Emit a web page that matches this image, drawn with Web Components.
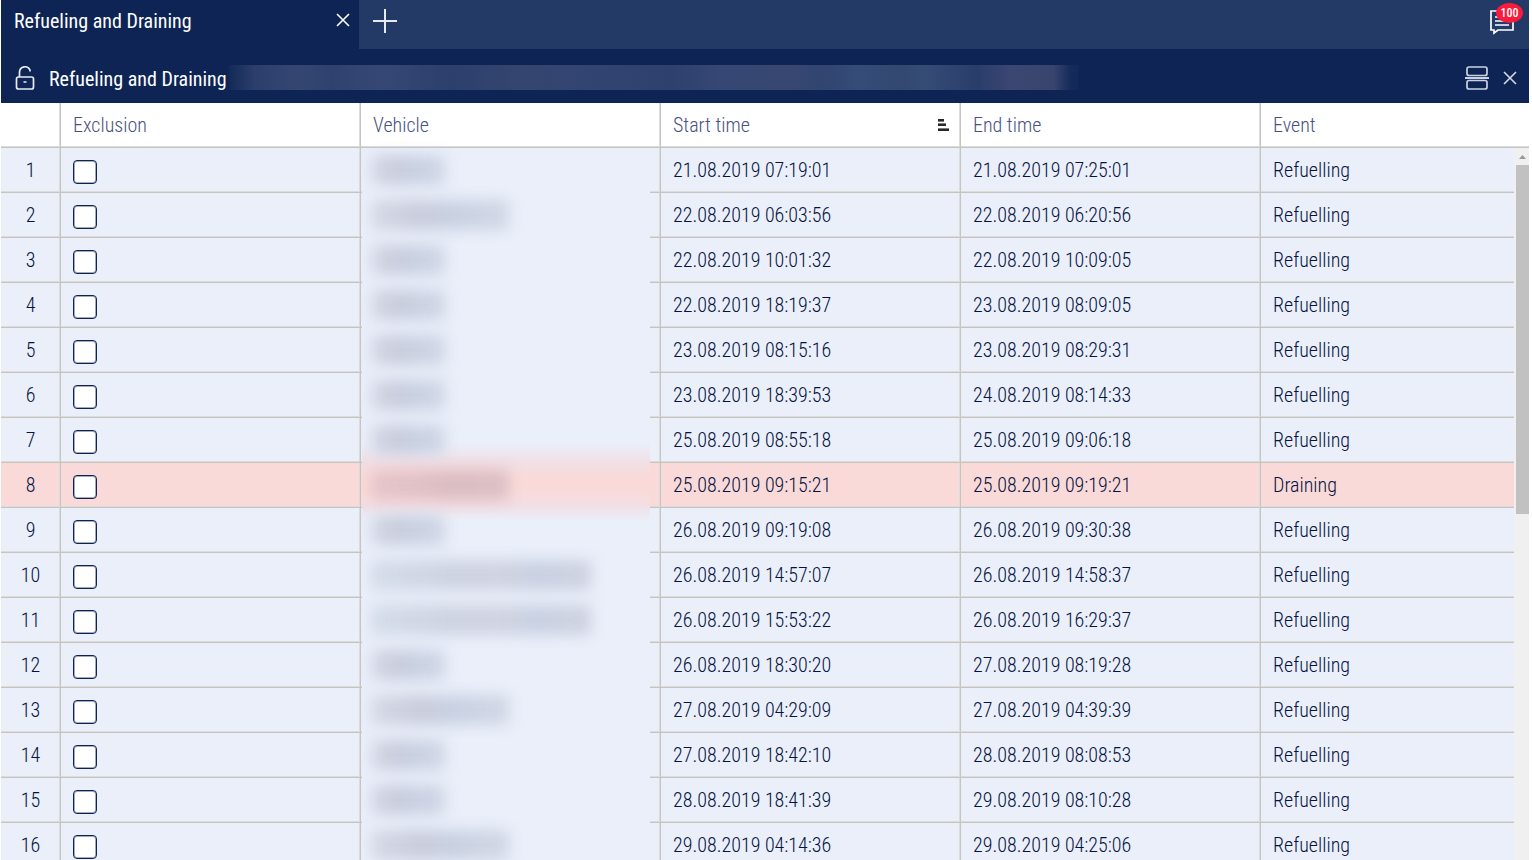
<!DOCTYPE html>
<html lang="en">
<head>
<meta charset="utf-8">
<title>Refueling and Draining</title>
<style>
  body {
    margin: 0 3px 0 1px;
    height: 100vh;
    overflow: hidden;
    background: #fff;
    color: #04143f;
    font: 300 20px/24px "Roboto Condensed", "Liberation Sans Narrow", Roboto, sans-serif;
  }
</style>
</head>
<body>
<report-app></report-app>

<template id="app-template">
  <style>
    :host { display: flex; flex-direction: column; height: 100%; }
  </style>
  <tab-bar>
    <report-tab>Refueling and Draining</report-tab>
  </tab-bar>
  <panel-header>Refueling and Draining</panel-header>
  <event-table></event-table>
</template>

<template id="tab-bar-template">
  <style>
    :host { display: flex; flex: none; height: 49px; background: #233a66; color: #fff; }
    button { border: 0; padding: 0; background: none; color: inherit; display: block; height: 42px; }
    svg { display: block; }
    .add { width: 52px; padding-left: 14px; }
    .messages { position: relative; margin-left: auto; width: 40px; }
    .messages svg { margin-top: 1px; }
    .badge {
      position: absolute; right: 6px; top: 3px; width: 27px; height: 20px;
      border-radius: 50%; background: #fb1a3c; color: #fff;
      font: 500 12px/20px "Roboto Condensed", "Liberation Sans Narrow", Roboto, sans-serif; text-align: center;
    }
  </style>
  <slot></slot>
  <button class="add" aria-label="New tab">
    <svg width="24" height="24" viewBox="0 0 24 24" stroke="#e6eaf2" stroke-width="2"><path d="M12 0v24M0 12h24"/></svg>
  </button>
  <button class="messages" aria-label="Messages">
    <svg width="26" height="26" viewBox="0 0 26 26" fill="none" stroke="#fff" stroke-width="1.700"><path d="M2 2h22v19H9l-4 3v-3H2zM6 8h10M6 12h14M6 16h14"/></svg>
    <span class="badge">100</span>
  </button>
</template>

<template id="tab-template">
  <style>
    :host { display: flex; justify-content: space-between; box-sizing: border-box; width: 358px; height: 49px; padding: 9px 9px 0 13px; background: #0e2454; font-weight: 400; }
    button { border: 0; padding: 0; background: none; height: 22px; }
    svg { display: block; }
  </style>
  <span><slot></slot></span>
  <button aria-label="Close tab">
    <svg width="14" height="14" viewBox="0 0 14 14" stroke="#fff" stroke-width="1.600"><path d="M1 1l12 12M13 1L1 13"/></svg>
  </button>
</template>

<template id="panel-header-template">
  <style>
    :host { display: flex; flex: none; align-items: center; box-sizing: border-box; height: 54px; padding: 6px 12px 0 14px; background: #0e2454; color: #fff; }
    h1 { margin: 0 2px 0 14px; font: inherit; font-weight: 400; white-space: nowrap; }
    button { border: 0; padding: 0; background: none; display: block; }
    svg { display: block; }
    .lock { margin-bottom: 2px; }
    .period {
      flex: 0 1 850px; height: 25px; margin-bottom: 4px;
      background: linear-gradient(90deg, #132958, #2c3f6c 3%, #344670 8%, #2f426e 12%, #364773 18%, #2c406c 26%, #34456f 34%, #314470 46%, #2e416c 52%, #354772 58%, #374772 66%, #30456f 70%, #344c76 74%, #324871 79%, #354c75 82%, #293d69 88%, #3c4672 92%, #38446e 97%, #152b5a 99%, #122858);
    }
    .split { margin-left: auto; margin-right: 14px; }
    .split, .close { margin-bottom: 2px; }
  </style>
  <button class="lock" aria-label="Lock">
    <svg width="20" height="26" viewBox="0 0 20 26" fill="none" stroke="#e8ebf4" stroke-width="1.700"><rect x="1.500" y="12" width="17" height="12" rx="2"/><path d="M4.500 12V7a5.500 5.500 0 0 1 10.500-2v1.500M8.500 17h3"/></svg>
  </button>
  <h1><slot></slot></h1>
  <span class="period"></span>
  <button class="split" aria-label="Split view">
    <svg width="24" height="26" viewBox="0 0 24 26" fill="none" stroke="#cbd1e0" stroke-width="1.700"><rect x="2" y="2" width="20" height="8.500" rx="2"/><path d="M0 13h24" stroke-width="2"/><rect x="2" y="15.500" width="20" height="8.500" rx="2"/></svg>
  </button>
  <button class="close" aria-label="Close report">
    <svg width="14" height="14" viewBox="0 0 14 14" stroke="#d5dae6" stroke-width="1.600"><path d="M1 1l12 12M13 1L1 13"/></svg>
  </button>
</template>

<template id="scroll-track-template">
  <style>
    :host { display: flex; flex-direction: column; background: #f0f0f0; }
    svg { flex: none; display: block; }
    .thumb { height: 49%; margin-left: 2px; background: #c1c1c1; }
  </style>
  <svg width="15" height="17" viewBox="0 0 15 17" fill="#999"><path d="M5 11l3.500-4 3.500 4z"/></svg>
  <div class="thumb"></div>
</template>

<template id="table-template">
  <style>
    :host { display: block; position: relative; flex: 1; min-height: 0; overflow: hidden; }
    .scroller { height: 100%; overflow: auto; scrollbar-width: none; }
    table { width: 100%; table-layout: fixed; border-collapse: separate; border-spacing: 0; }
    th, td {
      box-sizing: border-box; height: 45px; padding: 0 12px; text-align: left; font-weight: inherit; white-space: nowrap;
      border-right: 1px solid #c4c4c2; border-bottom: 1px solid #c4c4c2;
      box-shadow: inset -1px -1px #dcdcdb;
    }
    th { background: #fff; color: #48517f; }
    td { background: #ebeffa; }
    tr > :last-child { border-right: 0; box-shadow: inset 0 -1px #dcdcdb; }
    tr > :first-child { text-align: center; padding: 0; }
    .draining td { background: #fadad9; }
    .number { width: 60px; }
    .wide { width: 300px; }
    .sortable { display: flex; justify-content: space-between; align-items: center; }
    .sortable svg { margin-right: -1px; }
    input { appearance: none; display: block; box-sizing: border-box; width: 24px; height: 24px; margin: 3px 0 0; border: 1px solid #0f2350; border-radius: 4px; background: #fff; box-shadow: inset 0 0 0 1px #a3abbf; }
    .vehicle { position: relative; }
    .mask { position: absolute; z-index: 1; top: 0; bottom: -1px; left: 1px; right: 10px; background: #eaeffa; }
    .draining .mask { z-index: 2; top: -20px; bottom: -14px; background: linear-gradient(#eaeffa, #f1dfe5 25%, #fadad9 45%, #fadad9 60%, #f1dfe5 80%, #eaeffa); }
    .name { position: absolute; z-index: 3; top: 7px; left: 10px; height: 30px; border-radius: 4px; filter: blur(7px); background: linear-gradient(90deg, #d5dae6, #c9ccdc 35%, #c8d1e2 60%, #d2d7e5); }
    .draining .name { background: linear-gradient(90deg, #e6c5ca, #dfc0c5 40%, #d9bcc2 60%, #dcc0c6); }
    .short { width: 74px; }
    .medium { width: 138px; }
    .long { width: 220px; background: linear-gradient(90deg, #d4dde9, #ced3e1 35%, #d0d3e1 60%, #c8d1e2 75%, #d0d2e0); }
    scroll-track { position: absolute; z-index: 4; top: 45px; right: 0; bottom: 0; width: 15px; }
  </style>
  <div class="scroller">
    <table>
      <colgroup><col class="number"><col class="wide"><col class="wide"><col class="wide"><col class="wide"><col></colgroup>
      <thead>
        <tr>
          <th></th><th>Exclusion</th><th>Vehicle</th>
          <th aria-sort="ascending"><div class="sortable">Start time
            <svg width="11" height="12" viewBox="0 0 11 12" fill="#252928"><path d="M0 0h6v2H0zM0 5h8v2H0zM0 10h11v2H0z"/><path d="M0 2h6v1H0zM0 4h8v1H0zM0 9h11v1H0z" opacity=".6"/></svg></div></th>
          <th>End time</th><th>Event</th>
        </tr>
      </thead>
      <tbody></tbody>
    </table>
  </div>
  <scroll-track></scroll-track>
</template>

<script>
  class TemplateElement extends HTMLElement {
    constructor() {
      super();
      const template = document.getElementById(this.constructor.template);
      this.attachShadow({ mode: "open" }).append(template.content.cloneNode(true));
    }
  }

  const events = [
    ["21.08.2019 07:19:01", "21.08.2019 07:25:01", "short"],
    ["22.08.2019 06:03:56", "22.08.2019 06:20:56", "medium"],
    ["22.08.2019 10:01:32", "22.08.2019 10:09:05", "short"],
    ["22.08.2019 18:19:37", "23.08.2019 08:09:05", "short"],
    ["23.08.2019 08:15:16", "23.08.2019 08:29:31", "short"],
    ["23.08.2019 18:39:53", "24.08.2019 08:14:33", "short"],
    ["25.08.2019 08:55:18", "25.08.2019 09:06:18", "short"],
    ["25.08.2019 09:15:21", "25.08.2019 09:19:21", "medium", "Draining"],
    ["26.08.2019 09:19:08", "26.08.2019 09:30:38", "short"],
    ["26.08.2019 14:57:07", "26.08.2019 14:58:37", "long"],
    ["26.08.2019 15:53:22", "26.08.2019 16:29:37", "long"],
    ["26.08.2019 18:30:20", "27.08.2019 08:19:28", "short"],
    ["27.08.2019 04:29:09", "27.08.2019 04:39:39", "medium"],
    ["27.08.2019 18:42:10", "28.08.2019 08:08:53", "short"],
    ["28.08.2019 18:41:39", "29.08.2019 08:10:28", "short"],
    ["29.08.2019 04:14:36", "29.08.2019 04:25:06", "medium"]
  ];

  class EventTable extends TemplateElement {
    static template = "table-template";
    constructor() {
      super();
      this.shadowRoot.querySelector("tbody").innerHTML = events.map(([start, end, size, kind = "Refuelling"], i) => `
        <tr class="${kind.toLowerCase()}">
          <td>${i + 1}</td>
          <td><input type="checkbox" aria-label="Exclude event ${i + 1}"></td>
          <td class="vehicle"><div class="mask"></div><div class="name ${size}"></div></td>
          <td>${start}</td><td>${end}</td><td>${kind}</td>
        </tr>`).join("");
    }
  }

  customElements.define("scroll-track", class extends TemplateElement { static template = "scroll-track-template"; });
  customElements.define("report-tab", class extends TemplateElement { static template = "tab-template"; });
  customElements.define("tab-bar", class extends TemplateElement { static template = "tab-bar-template"; });
  customElements.define("panel-header", class extends TemplateElement { static template = "panel-header-template"; });
  customElements.define("event-table", EventTable);
  customElements.define("report-app", class extends TemplateElement { static template = "app-template"; });
</script>
</body>
</html>
